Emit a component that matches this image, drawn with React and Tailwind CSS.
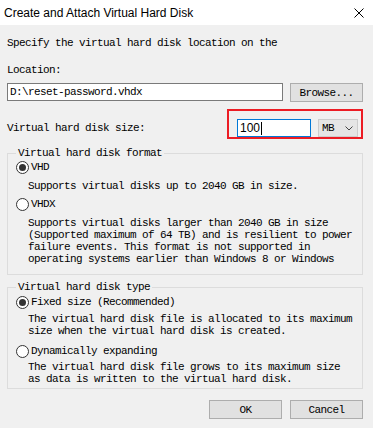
import React from 'react';

const mono = "font-['Liberation_Mono','Noto_Sans_CJK_SC',monospace] text-[11px] tracking-[-0.6px] leading-[12px]";

const Radio = ({ checked }) => (
  <span className="flex h-[13px] w-[13px] shrink-0 items-center justify-center rounded-full border border-[#333333] bg-white">
    {checked && <span className="h-[7px] w-[7px] rounded-full bg-[#333333]" />}
  </span>
);

const Lines = ({ lines, className }) => (
  <div className={className}>
    {lines.map((l) => (
      <div key={l} className="whitespace-pre">{l}</div>
    ))}
  </div>
);

const App = () => {
  return (
    <div className="h-[428px] w-[373px] overflow-hidden bg-[#f0f0f0] text-black">
      {/* Title bar */}
      <div className="flex h-[25px] items-center bg-white pl-[4px] pr-[9px]">
        <span className="font-['Liberation_Sans',sans-serif] text-[12px]">Create and Attach Virtual Hard Disk</span>
        <svg className="ml-auto" width="10" height="10" viewBox="0 0 10 10">
          <path d="M0.5 0.5L9.5 9.5M9.5 0.5L0.5 9.5" stroke="#000" strokeWidth="1" />
        </svg>
      </div>

      <div className={`pl-[7px] pr-[10px] ${mono}`}>
        <p className="mt-[12px] whitespace-pre">Specify the virtual hard disk location on the</p>
        <p className="mt-[15px]">Location:</p>

        <div className="mt-[7px] flex gap-[7px]">
          <div className="flex h-[18px] w-[276px] items-center border border-[#7a7a7a] bg-white pl-[2px]">
            D:\reset-password.vhdx
          </div>
          <button className="h-[19px] flex-1 border border-[#adadad] bg-[#e1e1e1]">Browse...</button>
        </div>

        {/* Size row */}
        <div className="relative mt-[17px] flex h-[18px] items-center">
          <span>Virtual hard disk size:</span>
          <div className="ml-auto mr-[5px] flex gap-[7px]">
            <div className="flex h-[18px] w-[74px] items-center border border-[#0078d7] bg-white pl-[2px] font-['Liberation_Sans',sans-serif] text-[12px] tracking-normal">
              100
              <span className="ml-[1px] h-[13px] w-[1px] bg-black" />
            </div>
            <div className="flex h-[18px] w-[40px] items-center border border-[#cccccc] bg-[#e5e5e5] pl-[3px] pr-[4px]">
              <span>MB</span>
              <svg className="ml-auto" width="8" height="5" viewBox="0 0 8 5">
                <path d="M0.5 0.5L4 4L7.5 0.5" stroke="#444" strokeWidth="1" fill="none" />
              </svg>
            </div>
          </div>
          <div className="absolute left-[220px] top-[-10px] h-[30px] w-[136px] border-2 border-[#ec1c24]" />
        </div>

        {/* Format group */}
        <fieldset className="mt-[10px] border border-[#dcdcdc] pb-[9px] pl-[8px]">
          <legend className="pl-[2px] pr-[2px]">Virtual hard disk format</legend>
          <div className="mt-[2px] flex h-[12px] items-center gap-[2px]">
            <Radio checked />
            <span>VHD</span>
          </div>
          <Lines className="ml-[12px] mt-[7px]" lines={['Supports virtual disks up to 2040 GB in size.']} />
          <div className="mt-[6px] flex h-[12px] items-center gap-[2px]">
            <Radio />
            <span>VHDX</span>
          </div>
          <Lines
            className="ml-[12px] mt-[7px]"
            lines={[
              'Supports virtual disks larger than 2040 GB in size',
              '(Supported maximum of 64 TB) and is resilient to power',
              'failure events. This format is not supported in',
              'operating systems earlier than Windows 8 or Windows',
            ]}
          />
        </fieldset>

        {/* Type group */}
        <fieldset className="mt-[6px] border border-[#dcdcdc] pb-[3px] pl-[8px]">
          <legend className="pl-[2px] pr-[2px]">Virtual hard disk type</legend>
          <div className="mt-[3px] flex h-[12px] items-center gap-[2px]">
            <Radio checked />
            <span>Fixed size (Recommended)</span>
          </div>
          <Lines
            className="ml-[12px] mt-[5px]"
            lines={['The virtual hard disk file is allocated to its maximum', 'size when the virtual hard disk is created.']}
          />
          <div className="mt-[8px] flex h-[12px] items-center gap-[2px]">
            <Radio />
            <span>Dynamically expanding</span>
          </div>
          <Lines
            className="ml-[12px] mt-[4px]"
            lines={['The virtual hard disk file grows to its maximum size', 'as data is written to the virtual hard disk.']}
          />
        </fieldset>

        <div className="mt-[11px] flex justify-end gap-[8px]">
          <button className="h-[19px] w-[73px] border border-[#adadad] bg-[#e1e1e1]">OK</button>
          <button className="h-[19px] w-[73px] border border-[#adadad] bg-[#e1e1e1]">Cancel</button>
        </div>
      </div>
    </div>
  );
};

export default App;
